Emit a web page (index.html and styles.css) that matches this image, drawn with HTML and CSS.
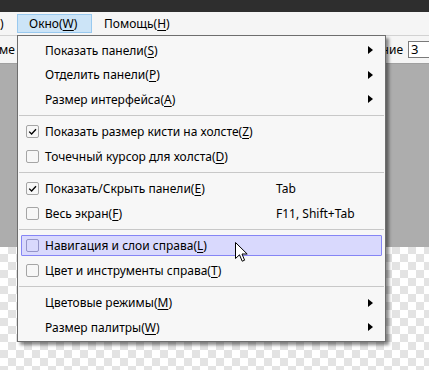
FILE: index.html
```html
<!DOCTYPE html>
<html lang="ru">
<head>
<meta charset="utf-8">
<link rel="stylesheet" href="styles.css">
</head>
<body>
<div class="app">
  <div class="titlebar"></div>
  <div class="menubar">
    <span class="mb-cut">)</span>
    <span class="mb-item active">Окно(<u>W</u>)</span>
    <span class="mb-item">Помощь(<u>H</u>)</span>
  </div>
  <div class="toolbar">
    <span class="tb-left">ме</span>
    <span class="tb-right">ние <span class="tb-input">3</span></span>
  </div>
  <div class="canvas">
    <div class="canvas-gray"></div>
    <div class="canvas-checker"></div>
  </div>

  <div class="menu">
    <div class="item"><span class="chk-cell"></span><span class="label">Показать панели(<u>S</u>)</span><span class="sc"></span><span class="arrow"></span></div>
    <div class="item"><span class="chk-cell"></span><span class="label">Отделить панели(<u>P</u>)</span><span class="sc"></span><span class="arrow"></span></div>
    <div class="item"><span class="chk-cell"></span><span class="label">Размер интерфейса(<u>A</u>)</span><span class="sc"></span><span class="arrow"></span></div>
    <div class="sep"></div>
    <div class="item"><span class="chk-cell"><span class="box checked"><svg viewBox="0 0 13 13" width="13" height="13"><path d="M3.2 6.6 L5.6 9 L10 4.2" fill="none" stroke="#000" stroke-width="1.3"/></svg></span></span><span class="label">Показать размер кисти на холсте(<u>Z</u>)</span><span class="sc"></span><span></span></div>
    <div class="item"><span class="chk-cell"><span class="box"></span></span><span class="label">Точечный курсор для холста(<u>D</u>)</span><span class="sc"></span><span></span></div>
    <div class="sep"></div>
    <div class="item"><span class="chk-cell"><span class="box checked"><svg viewBox="0 0 13 13" width="13" height="13"><path d="M3.2 6.6 L5.6 9 L10 4.2" fill="none" stroke="#000" stroke-width="1.3"/></svg></span></span><span class="label">Показать/Скрыть панели(<u>E</u>)</span><span class="sc">Tab</span><span></span></div>
    <div class="item"><span class="chk-cell"><span class="box"></span></span><span class="label">Весь экран(<u>F</u>)</span><span class="sc">F11, Shift+Tab</span><span></span></div>
    <div class="sep"></div>
    <div class="item hover"><span class="chk-cell"><span class="box"></span></span><span class="label">Навигация и слои справа(<u>L</u>)</span><span class="sc"></span><span></span></div>
    <div class="item"><span class="chk-cell"><span class="box"></span></span><span class="label">Цвет и инструменты справа(<u>T</u>)</span><span class="sc"></span><span></span></div>
    <div class="sep"></div>
    <div class="item"><span class="chk-cell"></span><span class="label">Цветовые режимы(<u>M</u>)</span><span class="sc"></span><span class="arrow"></span></div>
    <div class="item"><span class="chk-cell"></span><span class="label">Размер палитры(<u>W</u>)</span><span class="sc"></span><span class="arrow"></span></div>
  </div>

  <svg class="cursor" width="14" height="21" viewBox="0 0 14 21">
    <path d="M0.5 0.5 L0.5 16.5 L4.5 12.8 L7.2 19.2 L9.6 18.2 L7 12 L12.2 12 Z" fill="#fff" stroke="#000" stroke-width="1" stroke-linejoin="miter"/>
  </svg>
</div>
</body>
</html>
```
FILE: styles.css
```css
* { box-sizing: border-box; }
html, body { margin: 0; padding: 0; }
body {
  width: 429px;
  height: 370px;
  overflow: hidden;
  font-family: "Noto Sans", "DejaVu Sans", sans-serif;
  font-size: 12px;
  color: #000;
}
.app {
  position: relative;
  width: 429px;
  height: 370px;
  display: flex;
  flex-direction: column;
  overflow: hidden;
}
u { text-decoration: underline; text-underline-offset: 2px; text-decoration-thickness: 1px; }

.titlebar { height: 12px; background: #2e2e2e; flex: none; }

.menubar {
  height: 23px;
  flex: none;
  background: #f5f5f5;
  display: flex;
  align-items: center;
  line-height: 17px;
}
.mb-cut { width: 17px; }
.mb-item {
  height: 19px;
  display: flex;
  align-items: center;
  padding: 0 11px;
  border: 1px solid transparent;
}
.mb-item.active {
  width: 75px;
  background: #cce4f7;
  border-color: #99c9ef;
}

.toolbar {
  height: 29px;
  flex: none;
  background: #f5f5f5;
  border-top: 1px solid #d2d2d2;
  border-bottom: 1px solid #a0a0a0;
  display: flex;
  align-items: center;
  justify-content: space-between;
  overflow: hidden;
}
.tb-left { margin-left: -1px; }
.tb-right { display: flex; align-items: center; gap: 5px; margin-right: -40px; }
.tb-input {
  width: 61px;
  height: 17px;
  background: #fff;
  border: 1px solid #7a7a7a;
  padding-left: 2px;
  line-height: 15px;
  font-size: 13px;
}

.canvas { flex: 1; display: flex; flex-direction: column; }
.canvas-gray { height: 183px; background: #adadad; flex: none; }
.canvas-checker {
  flex: 1;
  background-color: #fff;
  background-image: conic-gradient(#e3e3e3 25%, #fff 0 50%, #e3e3e3 0 75%, #fff 0);
  background-size: 16px 16px;
  background-position: 0 -1px;
}

.menu {
  position: absolute;
  left: 17px;
  top: 35px;
  width: 369px;
  height: 307px;
  background: #f7f7f7;
  border: 1px solid #6e6e6e;
  box-shadow: 3px 3px 3px rgba(0,0,0,0.45);
  padding-top: 1.75px;
  display: flex;
  flex-direction: column;
}
.item {
  flex: none;
  height: 21px;
  margin: 1.75px 3px;
  border: 1px solid transparent;
  border-radius: 1px;
  display: grid;
  grid-template-columns: 23px 231px 1fr 13px;
  align-items: center;
  white-space: nowrap;
  line-height: 17px;
}
.item.hover {
  background: #d9d9fd;
  border-color: #8585f5;
}
.chk-cell { display: flex; align-items: center; padding-left: 4px; }
.box {
  width: 13px;
  height: 13px;
  border: 1px solid #a5a5a5;
  border-radius: 2px;
  background: #f7f7f7;
  position: relative;
}
.box svg { position: absolute; left: -1px; top: -1px; }
.item.hover .box { border-color: #9595c8; background: #d9d9fd; }
.arrow {
  width: 0; height: 0;
  border-top: 4.5px solid transparent;
  border-bottom: 4.5px solid transparent;
  border-left: 5px solid #000;
  justify-self: start;
}
.sep {
  flex: none;
  height: 1px;
  background: #c8c8c8;
  margin: 3.5px 1px;
}

.cursor {
  position: absolute;
  left: 235px;
  top: 242px;
}
```
